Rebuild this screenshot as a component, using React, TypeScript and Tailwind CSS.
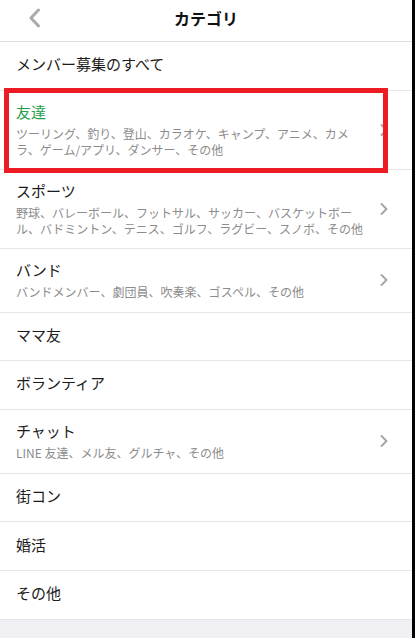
import React from "react";

type Category = {
    title: string;
    sub?: string;
    active?: boolean;
};

const CATEGORIES: Category[] = [
    { title: "メンバー募集のすべて" },
    {
        title: "友達",
        sub: "ツーリング、釣り、登山、カラオケ、キャンプ、アニメ、カメラ、ゲーム/アプリ、ダンサー、その他",
        active: true,
    },
    {
        title: "スポーツ",
        sub: "野球、バレーボール、フットサル、サッカー、バスケットボール、バドミントン、テニス、ゴルフ、ラグビー、スノボ、その他",
    },
    { title: "バンド", sub: "バンドメンバー、劇団員、吹奏楽、ゴスペル、その他" },
    { title: "ママ友" },
    { title: "ボランティア" },
    { title: "チャット", sub: "LINE 友達、メル友、グルチャ、その他" },
    { title: "街コン" },
    { title: "婚活" },
    { title: "その他" },
];

function Chevron() {
    return (
        <svg width="8" height="12" viewBox="0 0 8 12" fill="none" className="shrink-0">
            <path d="M1.5 1 L6.5 6 L1.5 11" stroke="#a3a3a3" strokeWidth="1.8" strokeLinecap="round" strokeLinejoin="round" />
        </svg>
    );
}

function CategoryRow({ item }: { item: Category }) {
    const twoLines = item.sub && item.sub.length > 30;
    const height = !item.sub ? "h-[48.6px] pb-[3px]" : twoLines ? "h-[79px]" : "h-[64px]";

    return (
        <div className={`flex items-center gap-3 border-b border-[#e6e6e6] bg-white pl-4 pr-[24px] ${height}`}>
            <div className="min-w-0 flex-1">
                <p className={`text-[15px] leading-[20px] ${item.active ? "text-[#22a04b]" : "text-[#1c1c1c]"}`}>{item.title}</p>
                {item.sub && <p className="mt-1 text-[12px] leading-[16px] text-[#8c8c8c]">{item.sub}</p>}
            </div>
            {item.sub && <Chevron />}
        </div>
    );
}

export default function App() {
    return (
        <div className="flex h-[638px] w-[415px] overflow-hidden bg-[#efeff4] font-['Noto_Sans_CJK_JP','Noto_Sans',sans-serif]">
            <div className="relative flex-1">
                <header className="grid h-[42px] grid-cols-[1fr_auto_1fr] items-center border-b border-[#dedede] bg-white pb-[6px]">
                    <div className="pl-[28px]">
                        <svg width="13" height="20" viewBox="0 0 13 20" fill="none">
                            <path d="M10.5 2 L3 10 L10.5 18" stroke="#ababab" strokeWidth="3" strokeLinecap="round" strokeLinejoin="round" />
                        </svg>
                    </div>
                    <h1 className="text-[16px] font-bold text-[#111]">カテゴリ</h1>
                    <div />
                </header>

                {CATEGORIES.map((c) => (
                    <CategoryRow key={c.title} item={c} />
                ))}

                {/* red highlight annotation */}
                <div className="pointer-events-none absolute left-[4px] top-[88px] h-[85px] w-[384px] border-[5px] border-[#ec1c24]" />
            </div>
            <div className="w-[3px] bg-black" />
        </div>
    );
}
